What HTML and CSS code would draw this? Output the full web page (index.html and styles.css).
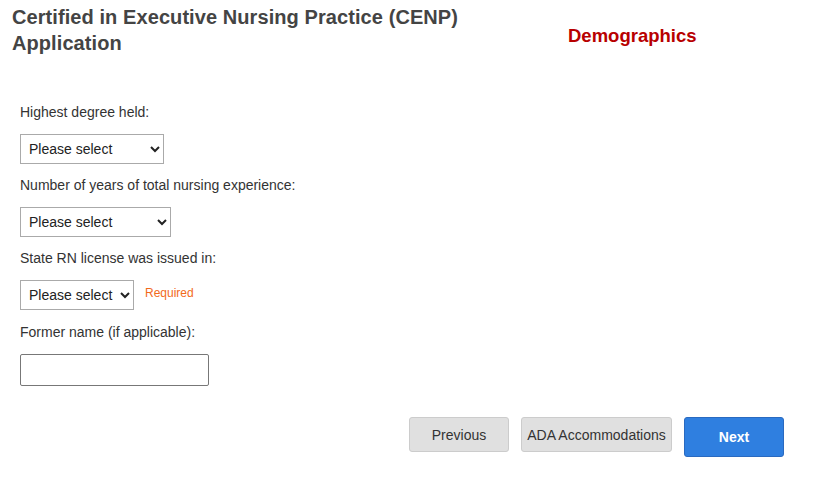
FILE: index.html
```html
<!DOCTYPE html>
<html>
<head>
<meta charset="utf-8">
<link rel="stylesheet" href="styles.css">
</head>
<body>
<div class="page">
  <header class="header">
    <h1 class="title">Certified in Executive Nursing Practice (CENP) Application</h1>
    <h2 class="section">Demographics</h2>
  </header>
  <form class="form">
    <div class="field">
      <label class="label">Highest degree held:</label>
      <div class="row"><select class="select w1"><option>Please select</option></select></div>
    </div>
    <div class="field">
      <label class="label">Number of years of total nursing experience:</label>
      <div class="row"><select class="select w2"><option>Please select</option></select></div>
    </div>
    <div class="field field-tall">
      <label class="label">State RN license was issued in:</label>
      <div class="row"><select class="select w3"><option>Please select</option></select><span class="required">Required</span></div>
    </div>
    <div class="field">
      <label class="label">Former name (if applicable):</label>
      <div class="row row-input"><input class="input" type="text"></div>
    </div>
    <div class="actions">
      <button type="button" class="btn btn-gray w-prev">Previous</button>
      <button type="button" class="btn btn-gray w-ada">ADA Accommodations</button>
      <button type="button" class="btn btn-blue">Next</button>
    </div>
  </form>
</div>
</body>
</html>
```
FILE: styles.css
```css
html, body {
  margin: 0;
  padding: 0;
  background: #fff;
  font-family: "Liberation Sans", Arial, sans-serif;
  color: #333;
}
.page {
  width: 823px;
}
.header {
  display: flex;
  align-items: flex-start;
  padding: 4px 0 0 12px;
}
.title {
  margin: 0;
  width: 470px;
  font-size: 20px;
  line-height: 26px;
  font-weight: bold;
  color: #444;
  letter-spacing: 0.08px;
}
.section {
  margin: 21px 0 0 86px;
  font-size: 18.5px;
  line-height: 22px;
  font-weight: bold;
  color: #b80000;
}
.form {
  padding: 46px 39px 0 20px;
}
.field {
  margin-bottom: 11px;
}
.field-tall {
  margin-bottom: 12px;
}
.label {
  display: block;
  font-size: 14px;
  line-height: 20px;
  margin-bottom: 12px;
  color: #333;
}
.row {
  display: flex;
  align-items: center;
  height: 30px;
}
.row-input {
  height: 32px;
}
.select {
  height: 30px;
  box-sizing: border-box;
  border: 1px solid #aaa;
  border-radius: 0;
  background: #fff;
  font-family: "Liberation Sans", Arial, sans-serif;
  font-size: 14px;
  color: #222;
  padding: 0 4px;
  margin: 0;
}
.w1 { width: 144px; }
.w2 { width: 151px; }
.w3 { width: 114px; }
.required {
  margin-left: 11px;
  font-size: 12px;
  color: #f26a1b;
  position: relative;
  top: -2px;
}
.input {
  width: 189px;
  height: 32px;
  box-sizing: border-box;
  border: 1px solid #777;
  border-radius: 2px;
  margin: 0;
}
.actions {
  display: flex;
  justify-content: flex-end;
  align-items: flex-start;
  gap: 12px;
  margin-top: 31px;
}
.btn {
  font-family: "Liberation Sans", Arial, sans-serif;
  font-size: 14px;
  border-radius: 3px;
  box-sizing: border-box;
  margin: 0;
  cursor: pointer;
}
.btn-gray {
  height: 35px;
  background: #e0e0e0;
  border: 1px solid #ccc;
  color: #333;
}
.w-prev { width: 100px; }
.w-ada { width: 151px; padding: 0; }
.btn-blue {
  width: 100px;
  height: 40px;
  background: #2f7fe0;
  border: 1px solid #2a6ac0;
  color: #fff;
  font-weight: 600;
}
```
